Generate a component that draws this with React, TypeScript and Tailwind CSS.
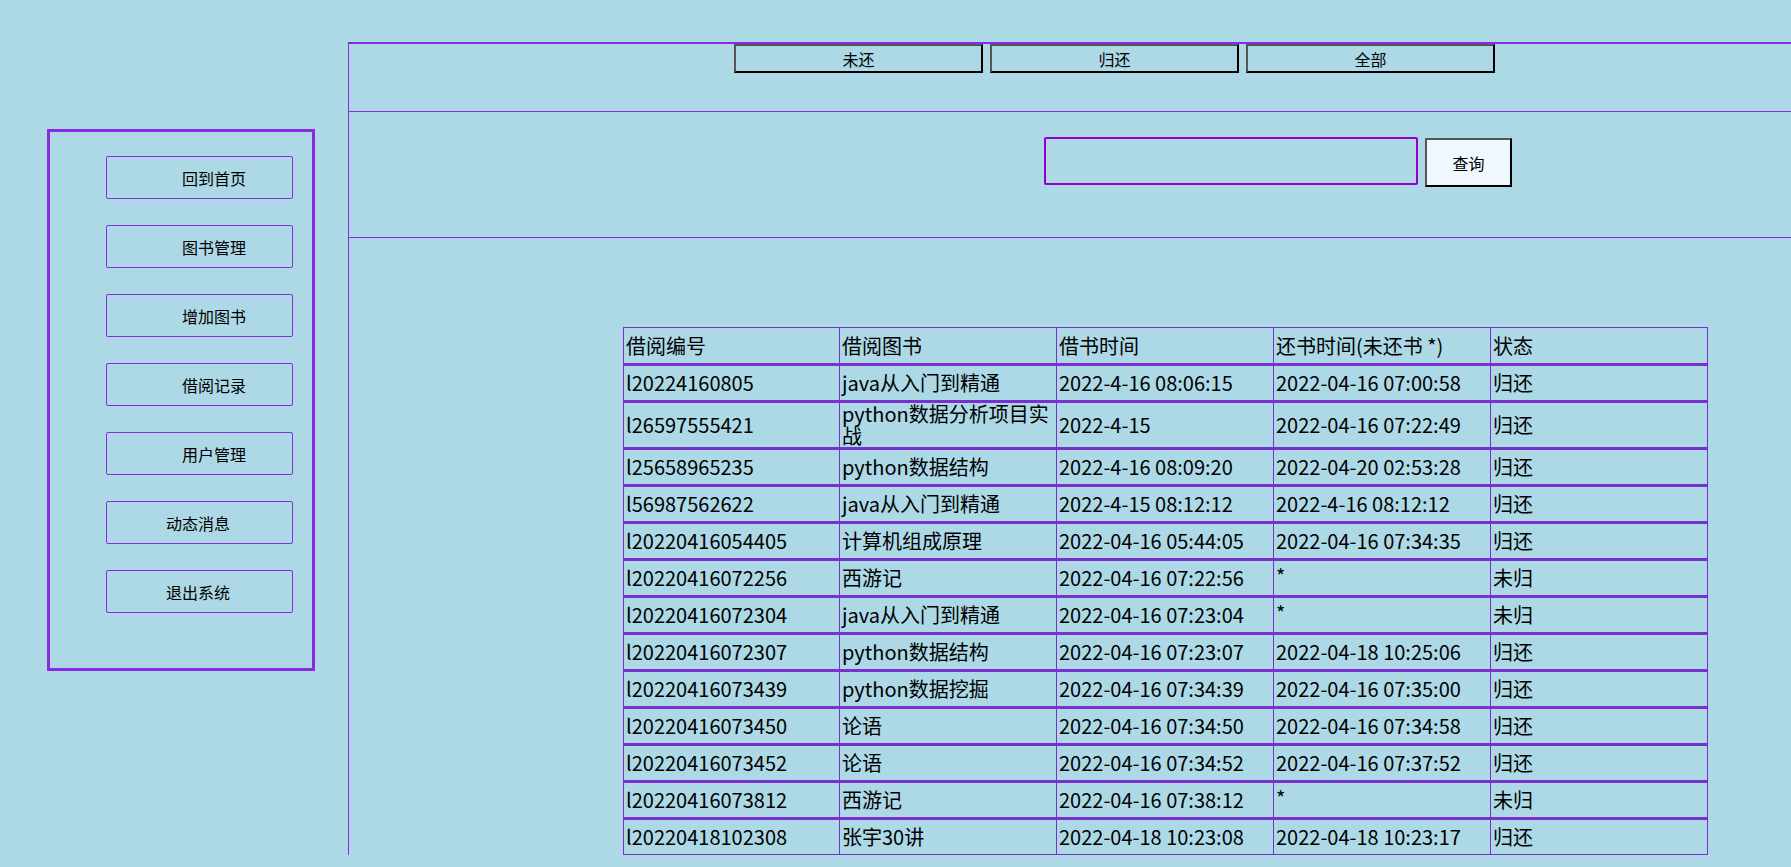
import React from "react";

const menu = [
  { label: "回到首页", pad: "pl-[75px]" },
  { label: "图书管理", pad: "pl-[75px]" },
  { label: "增加图书", pad: "pl-[75px]" },
  { label: "借阅记录", pad: "pl-[75px]" },
  { label: "用户管理", pad: "pl-[75px]" },
  { label: "动态消息", pad: "pl-[59px]" },
  { label: "退出系统", pad: "pl-[59px]" },
];

const rows = [
  ["l20224160805", "java从入门到精通", "2022-4-16 08:06:15", "2022-04-16 07:00:58", "归还"],
  ["l26597555421", "python数据分析项目实战", "2022-4-15", "2022-04-16 07:22:49", "归还"],
  ["l25658965235", "python数据结构", "2022-4-16 08:09:20", "2022-04-20 02:53:28", "归还"],
  ["l56987562622", "java从入门到精通", "2022-4-15 08:12:12", "2022-4-16 08:12:12", "归还"],
  ["l20220416054405", "计算机组成原理", "2022-04-16 05:44:05", "2022-04-16 07:34:35", "归还"],
  ["l20220416072256", "西游记", "2022-04-16 07:22:56", "*", "未归"],
  ["l20220416072304", "java从入门到精通", "2022-04-16 07:23:04", "*", "未归"],
  ["l20220416072307", "python数据结构", "2022-04-16 07:23:07", "2022-04-18 10:25:06", "归还"],
  ["l20220416073439", "python数据挖掘", "2022-04-16 07:34:39", "2022-04-16 07:35:00", "归还"],
  ["l20220416073450", "论语", "2022-04-16 07:34:50", "2022-04-16 07:34:58", "归还"],
  ["l20220416073452", "论语", "2022-04-16 07:34:52", "2022-04-16 07:37:52", "归还"],
  ["l20220416073812", "西游记", "2022-04-16 07:38:12", "*", "未归"],
  ["l20220418102308", "张宇30讲", "2022-04-18 10:23:08", "2022-04-18 10:23:17", "归还"],
];

const font = { fontFamily: '"Noto Sans CJK SC", "Noto Sans", sans-serif' };

export default function App() {
  return (
    <div className="min-h-[867px] w-full bg-[#add8e6] flex items-start overflow-hidden text-black" style={font}>
      <aside className="ml-[47px] mt-[129px] w-[268px] h-[542px] shrink-0 border-[3px] border-[#8a2be2] pt-[24px] flex flex-col gap-[26px]">
        {menu.map((m) => (
          <div
            key={m.label}
            className={`ml-[56px] w-[187px] h-[43px] border border-[#8a2be2] rounded-[2px] flex items-center text-[16px] ${m.pad}`}
          >
            {m.label}
          </div>
        ))}
      </aside>

      <main className="ml-[33px] mt-[42px] flex-1 border-l border-t-2 border-[#8a2be2]">
        <div className="h-[68px] pl-[385px] flex items-start gap-[7px] border-b border-[#8a2be2]">
          {["未还", "归还", "全部"].map((t) => (
            <button
              key={t}
              className="w-[249px] h-[29px] border-2 border-t-[#555] border-l-[#555] border-r-black border-b-black text-[16px] flex items-center justify-center"
            >
              {t}
            </button>
          ))}
        </div>
        <div className="h-[126px] pl-[695px] pt-[25px] flex items-start gap-[7px] border-b border-[#8a2be2]">
          <input className="w-[374px] h-[48px] border-2 border-[#9400d3] rounded-[2px] bg-transparent outline-none" />
          <button className="mt-[1px] w-[87px] h-[49px] bg-[#f0f8ff] border-2 border-t-[#555] border-l-[#555] border-r-black border-b-black text-[16px]">
            查询
          </button>
        </div>
        <div className="pl-[274px] pt-[89px]">
          <table className="border-separate border-spacing-0 text-[20px] leading-[22px] w-[1085px] table-fixed">
            <thead>
              <tr>
                {["借阅编号", "借阅图书", "借书时间", "还书时间(未还书 *)", "状态"].map((h, i) => (
                  <th key={h} className={`h-[37px] font-normal text-left px-[2px] border border-[#7a2fd0] ${i > 0 ? "border-l-0" : ""}`}>
                    {h}
                  </th>
                ))}
              </tr>
            </thead>
            <tbody>
              {rows.map((r) => (
                <tr key={r[0]}>
                  {r.map((c, i) => (
                    <td
                      key={i}
                      className={`h-[37px] px-[2px] align-middle border border-t-2 border-[#7a2fd0] ${i > 0 ? "border-l-0" : ""} ${i === 3 && c === "*" ? "align-top pt-[4px]" : ""}`}
                    >
                      {c}
                    </td>
                  ))}
                </tr>
              ))}
            </tbody>
          </table>
        </div>
      </main>
    </div>
  );
}
